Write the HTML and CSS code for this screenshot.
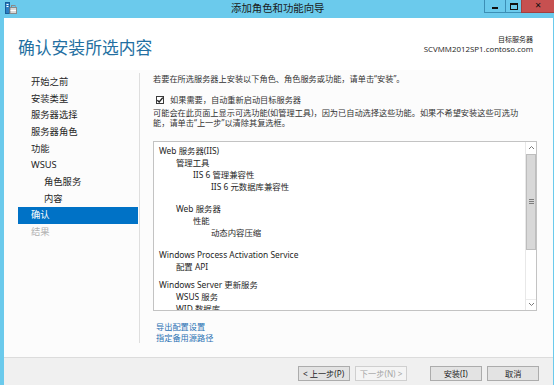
FILE: index.html
```html
<!DOCTYPE html>
<html lang="zh-CN">
<head>
<meta charset="utf-8">
<title>添加角色和功能向导</title>
<link rel="stylesheet" href="styles.css">
</head>
<body>
<div class="window">
  <div class="titlebar">
    <div class="tb-left">
      <svg class="appicon" width="12" height="12" viewBox="0 0 12 12">
        <rect x="0.5" y="0.5" width="4" height="11" fill="#2b7fc4" stroke="#1a5f99" stroke-width="1"/>
        <rect x="1.5" y="2" width="2" height="1" fill="#ffffff"/>
        <rect x="1.5" y="4" width="2" height="1" fill="#ffffff"/>
        <rect x="5" y="5.5" width="6.5" height="6" fill="#d9d9d9" stroke="#8a8a8a" stroke-width="1"/>
        <rect x="6.5" y="3.5" width="3.5" height="2" fill="none" stroke="#8a8a8a" stroke-width="1"/>
        <rect x="5.5" y="8" width="5.5" height="1" fill="#ffffff"/>
      </svg>
    </div>
    <div class="wintitle">添加角色和功能向导</div>
    <div class="caption-group">
      <div class="cb cb-min"><i class="g-min"></i></div>
      <div class="cb cb-max"><i class="g-max"></i></div>
      <div class="cb cb-close"><b class="g-x">✕</b></div>
    </div>
  </div>
  <div class="client">
    <div class="header">
      <h1 class="pagetitle">确认安装所选内容</h1>
      <div class="target">
        <div class="target-label">目标服务器</div>
        <div class="target-name">SCVMM2012SP1.contoso.com</div>
      </div>
    </div>
    <div class="main">
      <nav class="nav">
        <div class="nav-item">开始之前</div>
        <div class="nav-item">安装类型</div>
        <div class="nav-item">服务器选择</div>
        <div class="nav-item">服务器角色</div>
        <div class="nav-item">功能</div>
        <div class="nav-item">WSUS</div>
        <div class="nav-item sub">角色服务</div>
        <div class="nav-item sub">内容</div>
        <div class="nav-item active">确认</div>
        <div class="nav-item disabled">结果</div>
      </nav>
      <section class="content">
        <p class="intro">若要在所选服务器上安装以下角色、角色服务或功能，请单击“安装”。</p>
        <label class="check-row">
          <span class="checkbox">
            <svg width="8" height="8" viewBox="0 0 8 8"><path d="M1.3 4.2 L3.2 6 L6.8 1.6" fill="none" stroke="#222" stroke-width="1.4"/></svg>
          </span>
          <span>如果需要，自动重新启动目标服务器</span>
        </label>
        <p class="note">可能会在此页面上显示可选功能(如管理工具)，因为已自动选择这些功能。如果不希望安装这些可选功<br>能，请单击“上一步”以清除其复选框。</p>
        <div class="listbox">
          <div class="tree">
            <div class="ti lv0">Web 服务器(IIS)</div>
            <div class="ti lv1">管理工具</div>
            <div class="ti lv2">IIS 6 管理兼容性</div>
            <div class="ti lv3">IIS 6 元数据库兼容性</div>
            <div class="ti lv1 gap">Web 服务器</div>
            <div class="ti lv2">性能</div>
            <div class="ti lv3">动态内容压缩</div>
            <div class="ti lv0 gap">Windows Process Activation Service</div>
            <div class="ti lv1">配置 API</div>
            <div class="ti lv0 gap-s">Windows Server 更新服务</div>
            <div class="ti lv1">WSUS 服务</div>
            <div class="ti lv1">WID 数据库</div>
          </div>
          <div class="scrollbar">
            <div class="sb-arrow">
              <svg width="7" height="5" viewBox="0 0 7 5"><path d="M1 4 L3.5 1.5 L6 4" fill="none" stroke="#7a7a7a" stroke-width="1"/></svg>
            </div>
            <div class="sb-thumb"><span class="grip"></span></div>
            <div class="sb-track"></div>
            <div class="sb-arrow sb-down">
              <svg width="7" height="5" viewBox="0 0 7 5"><path d="M1 1 L3.5 3.5 L6 1" fill="none" stroke="#7a7a7a" stroke-width="1"/></svg>
            </div>
          </div>
        </div>
        <div class="links">
          <a class="link" href="#">导出配置设置</a>
          <a class="link" href="#">指定备用源路径</a>
        </div>
      </section>
    </div>
    <div class="footer">
      <button class="btn">&lt; 上一步(P)</button>
      <button class="btn dis">下一步(N) &gt;</button>
      <button class="btn wide-gap">安装(I)</button>
      <button class="btn">取消</button>
    </div>
  </div>
</div>
</body>
</html>
```
FILE: styles.css
```css
* { box-sizing: border-box; }
html, body { margin: 0; padding: 0; }
body {
  width: 554px;
  height: 385px;
  overflow: hidden;
  font-family: "Noto Sans", "Noto Sans CJK SC", sans-serif;
  color: #2a2a2a;
}
.window {
  width: 554px;
  height: 385px;
  background: #6bcaec;
  display: flex;
  flex-direction: column;
}
.titlebar {
  height: 18px;
  flex: none;
  display: flex;
  align-items: flex-start;
}
.tb-left { width: 230px; flex: none; padding: 2px 0 0 5px; }
.appicon { display: block; }
.wintitle {
  flex: 1;
  font-size: 10.4px;
  line-height: 16px;
  color: #1a1a1a;
  font-family: "Noto Sans CJK SC", sans-serif;
  white-space: nowrap;
  padding-left: 1px;
}
.caption-group {
  flex: none;
  width: 70px;
  height: 13px;
  margin-right: 0;
  display: flex;
  background: #6bcaec;
}
.cb {
  height: 13px;
  display: flex;
  align-items: center;
  justify-content: center;
  border-left: 1px solid #3c8fb5;
  border-bottom: 1px solid #3c8fb5;
}
.cb-min { width: 21px; background: #6bcaec; }
.cb-max { width: 16px; background: #6bcaec; }
.cb-close { width: 33px; background: #c75050; border-left-color: #a33f3f; border-bottom-color: #a33f3f; }
.g-min { display: block; width: 6px; height: 2px; background: #111; margin-top: 4px; }
.g-max { display: block; width: 8px; height: 7px; border: 1px solid #111; border-top-width: 2px; }
.g-x { font-family: "DejaVu Sans", sans-serif; font-size: 8px; line-height: 8px; color: #111; font-weight: 700; }

.client {
  flex: 1;
  margin: 0 1px 0 4px;
  background: #ffffff;
  display: flex;
  flex-direction: column;
  min-height: 0;
}
.header {
  height: 52px;
  flex: none;
  display: flex;
  justify-content: space-between;
  align-items: flex-start;
  padding: 0 20px 0 14px;
}
.pagetitle {
  margin: 17px 0 0 0;
  font-family: "Noto Sans CJK SC", sans-serif;
  font-weight: 400;
  font-size: 16.8px;
  line-height: 24px;
  color: #236fa1;
}
.target {
  margin-top: 17px;
  text-align: right;
  color: #222;
}
.target-label { font-size: 7px; line-height: 9px; font-family: "Noto Sans CJK SC", sans-serif; }
.target-name { font-size: 7.9px; line-height: 10px; font-family: "Open Sans", "Noto Sans", sans-serif; }

.main {
  height: 287px;
  flex: none;
  display: flex;
  background: #fcfcfc;
}
.nav {
  width: 136px;
  flex: none;
  margin: 3px 0 14px 0;
  padding: 1px 1px 0 14px;
  border-right: 1px solid #dedede;
  display: flex;
  flex-direction: column;
}
.nav-item {
  height: 16.67px;
  line-height: 16.67px;
  padding-left: 13px;
  font-size: 9.3px;
  color: #262626;
  white-space: nowrap;
}
.nav-item.sub { padding-left: 26px; }
.nav-item.active { background: #0072c6; color: #ffffff; }
.nav-item.disabled { color: #b2b2b2; }

.content {
  flex: 1;
  min-width: 0;
  padding: 2px 16px 0 13px;
  font-size: 8.2px;
  color: #333;
}
.intro { margin: 0.5px 0 0 0; line-height: 11px; white-space: nowrap; }
.check-row {
  margin-top: 10.5px;
  display: flex;
  align-items: center;
  height: 11px;
  line-height: 11px;
  padding-left: 3px;
  gap: 6px;
  white-space: nowrap;
}
.checkbox {
  width: 8px;
  height: 8px;
  border: 1px solid #3a3a3a;
  background: #fff;
  display: flex;
  align-items: center;
  justify-content: center;
}
.checkbox svg { display: block; flex: none; }
.note { margin: 3px 0 0 0; line-height: 10px; white-space: nowrap; }

.listbox {
  margin-top: 12.5px;
  height: 170px;
  border: 1px solid #c3c3c3;
  background: #ffffff;
  display: flex;
  overflow: hidden;
}
.tree {
  flex: 1;
  padding: 3px 0 0 0;
  overflow: hidden;
  color: #1e1e1e;
  font-size: 8.4px;
}
.ti { height: 12px; line-height: 12px; white-space: nowrap; }
.ti.lv0 { padding-left: 5px; }
.ti.lv1 { padding-left: 22px; }
.ti.lv2 { padding-left: 39px; }
.ti.lv3 { padding-left: 57px; }
.ti.gap { margin-top: 10px; }
.ti.gap-s { margin-top: 6px; }

.scrollbar {
  width: 11px;
  flex: none;
  display: flex;
  flex-direction: column;
  border-left: 1px solid #e8e8e8;
  background: #ffffff;
}
.sb-arrow {
  height: 12px;
  display: flex;
  align-items: center;
  justify-content: center;
  flex: none;
}
.sb-arrow svg { display: block; }
.sb-down { height: 11px; border-top: 1px solid #ececec; }
.sb-thumb {
  height: 96px;
  flex: none;
  background: #d8d8d8;
  border: 1px solid #bdbdbd;
  display: flex;
  align-items: center;
  justify-content: center;
}
.grip {
  display: block;
  width: 5px;
  height: 5px;
  background: repeating-linear-gradient(to bottom, #7d7d7d 0, #7d7d7d 1px, transparent 1px, transparent 2px);
}
.sb-track { flex: 1; }

.links {
  margin-top: 10.5px;
  display: flex;
  flex-direction: column;
  align-items: flex-start;
  padding-left: 3px;
}
.link {
  line-height: 11px;
  color: #2a71b3;
  text-decoration: none;
  white-space: nowrap;
}

.footer {
  flex: 1;
  background: #f0f0f0;
  border-top: 1px solid #dcdcdc;
  display: flex;
  justify-content: flex-end;
  align-items: flex-start;
  padding: 7.7px 13.7px 0 0;
  gap: 5.6px;
}
.btn {
  width: 52px;
  height: 15.5px;
  padding: 0;
  border: 1px solid #acacac;
  background: #e3e3e3;
  font-family: "Noto Sans", "Noto Sans CJK SC", sans-serif;
  font-size: 8.2px;
  line-height: 13px;
  color: #1e1e1e;
  white-space: nowrap;
}
.btn.dis { border-color: #cfcfcf; background: #f4f4f4; color: #a6a6a6; }
.btn.wide-gap { margin-left: 17px; }
```
